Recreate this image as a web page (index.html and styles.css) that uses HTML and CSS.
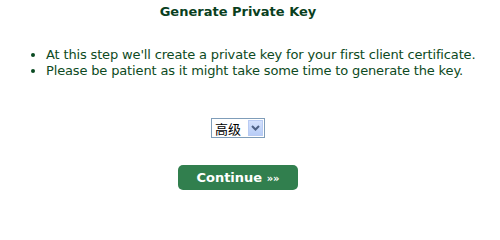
FILE: index.html
```html
<!DOCTYPE html>
<html>
<head>
<meta charset="utf-8">
<link rel="stylesheet" href="styles.css">
</head>
<body>
<div class="page">
  <h1 class="title">Generate Private Key</h1>
  <ul class="notes">
    <li>At this step we'll create a private key for your first client certificate.</li>
    <li>Please be patient as it might take some time to generate the key.</li>
  </ul>
  <div class="field">
    <span class="select-wrap">
      <select class="select"><option>高级</option><option>中级</option></select>
      <span class="arrow"><svg width="9" height="6" viewBox="0 0 9 6"><path d="M1 1 L4.5 4.5 L8 1" fill="none" stroke="#4d6185" stroke-width="2"/></svg></span>
    </span>
  </div>
  <div class="actions">
    <button class="continue">Continue <span class="raquo">»»</span></button>
  </div>
</div>
</body>
</html>
```
FILE: styles.css
```css
html, body {
  margin: 0;
  padding: 0;
  background: #ffffff;
}
body {
  font-family: "DejaVu Sans", Verdana, sans-serif;
  font-size: 13px;
  color: #0d4a22;
}
.page {
  width: 476px;
  padding-top: 4px;
}
.title {
  margin: 0;
  font-size: 13px;
  line-height: 16px;
  font-weight: bold;
  text-align: center;
  color: #0a3f1e;
}
.notes {
  margin: 27px 0 0 0;
  padding-left: 46px;
  line-height: 16px;
  list-style: disc;
  color: #0d4a22;
  letter-spacing: -0.15px;
}
.notes li {
  white-space: nowrap;
}
.notes li::marker {
  color: #0a4a22;
}
.field {
  margin-top: 39px;
  display: flex;
  justify-content: center;
}
.select-wrap {
  position: relative;
  display: block;
  width: 54px;
  height: 20px;
}
.select {
  display: block;
  -webkit-appearance: none;
  appearance: none;
  width: 54px;
  height: 20px;
  margin: 0;
  padding: 0 0 0 3px;
  border: 1px solid #7f9db9;
  border-radius: 0;
  background: #ffffff;
  font-family: "Noto Sans CJK SC", "DejaVu Sans", sans-serif;
  font-size: 13px;
  color: #000000;
  box-sizing: border-box;
}
.arrow {
  position: absolute;
  right: 2px;
  top: 2px;
  width: 15px;
  height: 16px;
  box-sizing: border-box;
  border: 1px solid #b9cbf3;
  background: linear-gradient(#d4e1fd, #b8cdf7);
  display: flex;
  align-items: center;
  justify-content: center;
  pointer-events: none;
}
.actions {
  margin-top: 27px;
  display: flex;
  justify-content: center;
}
.continue {
  display: block;
  width: 120px;
  height: 25px;
  border: none;
  border-radius: 5px;
  background: #317f4e;
  color: #ffffff;
  font-family: "DejaVu Sans", Verdana, sans-serif;
  font-size: 13px;
  font-weight: bold;
  padding: 0;
  margin: 0;
}
.raquo {
  font-size: 10px;
}
```
